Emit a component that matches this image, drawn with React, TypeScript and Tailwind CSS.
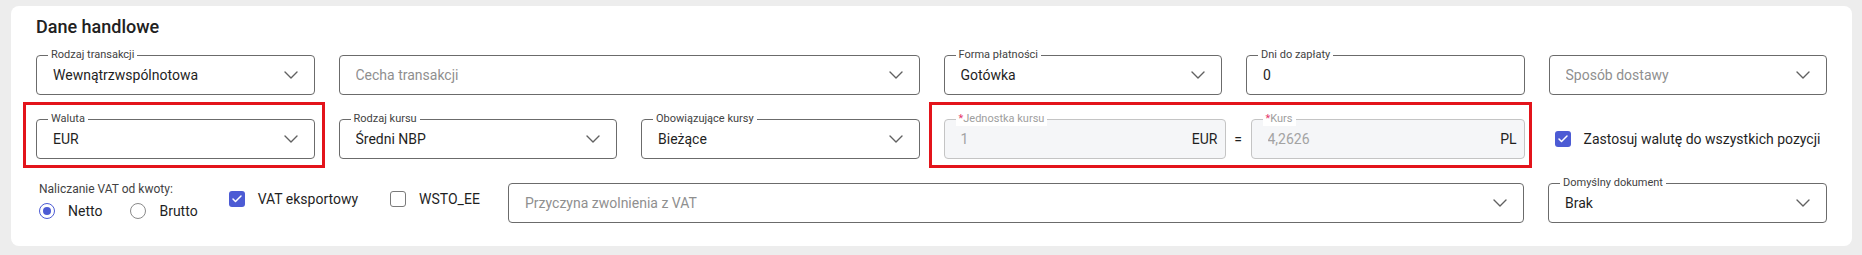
import { ChevronDown, Check } from "lucide-react";
import type { ReactNode } from "react";

type FieldProps = {
  label?: string;
  value?: string;
  placeholder?: string;
  select?: boolean;
  disabled?: boolean;
  required?: boolean;
  suffix?: string;
  className?: string;
};

function Field({ label, value, placeholder, select, disabled, required, suffix, className = "" }: FieldProps) {
  return (
    <div
      className={[
        "relative flex h-10 items-center rounded-[4px] border pl-4",
        select ? "pr-[11px]" : "pr-[7px]",
        disabled ? "border-[#c4c4c4] bg-[#f5f6f8]" : "border-[#6b6b6b] bg-white",
        className,
      ].join(" ")}
    >
      {label && (
        <span
          className={[
            "absolute -top-2 left-[11px] bg-white px-[3px] text-[11px] leading-[14px]",
            disabled ? "text-[#9e9e9e]" : "text-[#424242]",
          ].join(" ")}
        >
          {required && <span className="text-[#e5396b]">*</span>}
          {label}
        </span>
      )}
      <span
        className={[
          "flex-1 truncate text-[14px]",
          value && !disabled ? "text-[#1f1f1f]" : "text-[#8f8f8f]",
          disabled ? "text-[#a3a3a3]" : "",
        ].join(" ")}
      >
        {value ?? placeholder}
      </span>
      {suffix && <span className="text-[14px] text-[#1f1f1f]">{suffix}</span>}
      {select && <ChevronDown size={24} strokeWidth={1.4} className="text-[#616161]" />}
    </div>
  );
}

function Checkbox({ checked, children }: { checked?: boolean; children: ReactNode }) {
  return (
    <label className="flex h-4 items-center gap-[13px] text-[14px] text-[#1f1f1f]">
      <span
        className={[
          "flex h-4 w-4 shrink-0 items-center justify-center rounded-[3px]",
          checked ? "bg-[#4c5bd4]" : "border border-[#7a7a7a] bg-white",
        ].join(" ")}
      >
        {checked && <Check size={12} strokeWidth={3} className="text-white" />}
      </span>
      {children}
    </label>
  );
}

function Radio({ checked, children }: { checked?: boolean; children: ReactNode }) {
  return (
    <label className="flex h-5 items-center gap-[13px] text-[14px] text-[#1f1f1f]">
      <span
        className={[
          "flex h-4 w-4 shrink-0 items-center justify-center rounded-full border-[1.5px]",
          checked ? "border-[#4c5bd4]" : "border-[#8a8a8a]",
        ].join(" ")}
      >
        {checked && <span className="h-2 w-2 rounded-full bg-[#4c5bd4]" />}
      </span>
      {children}
    </label>
  );
}

function Highlight({ className }: { className: string }) {
  return <div className={"pointer-events-none absolute border-[3px] border-[#e3141b] " + className} />;
}

export default function App() {
  return (
    <div className="min-h-screen bg-[#ededed] pl-[11px] pr-[10px] pt-[6px] font-['Roboto',sans-serif]">
      <div className="rounded-lg bg-white px-[25px] pb-[23px] pt-[9px]">
        <h2 className="text-[18px] font-medium leading-6 text-[#212121]">Dane handlowe</h2>

        <div className="mt-4 grid grid-cols-6 gap-x-6 gap-y-6">
          {/* row 1 */}
          <Field label="Rodzaj transakcji" value="Wewnątrzwspólnotowa" select />
          <Field placeholder="Cecha transakcji" select className="col-span-2" />
          <Field label="Forma płatności" value="Gotówka" select />
          <Field label="Dni do zapłaty" value="0" />
          <Field placeholder="Sposób dostawy" select />

          {/* row 2 */}
          <div className="relative">
            <Field label="Waluta" value="EUR" select />
            <Highlight className="-bottom-[9px] -left-[13px] -right-[10px] -top-[17px]" />
          </div>
          <Field label="Rodzaj kursu" value="Średni NBP" select />
          <Field label="Obowiązujące kursy" value="Bieżące" select />
          <div className="relative col-span-2 flex items-center">
            <Field label="Jednostka kursu" required disabled value="1" suffix="EUR" className="w-[282px]" />
            <span className="w-[25px] text-center text-[14px] text-[#1f1f1f]">=</span>
            <Field label="Kurs" required disabled value="4,2626" suffix="PL" className="flex-1" />
            <Highlight className="-bottom-[9px] -left-[15px] -right-[7px] -top-[17px]" />
          </div>
          <div className="flex items-center pl-[6px]">
            <Checkbox checked>Zastosuj walutę do wszystkich pozycji</Checkbox>
          </div>
        </div>

        {/* row 3 */}
        <div className="mt-6 flex h-10 items-center gap-6">
          <div className="flex h-10 w-[448px] shrink-0 items-start">
            <div className="-mt-px flex flex-col pl-[3px]">
              <span className="text-[12px] leading-[14px] text-[#424242]">Naliczanie VAT od kwoty:</span>
              <div className="mt-[5px] flex items-center gap-7">
                <Radio checked>Netto</Radio>
                <Radio>Brutto</Radio>
              </div>
            </div>
            <div className="ml-[31px] mt-2 flex items-center gap-8">
              <Checkbox checked>VAT eksportowy</Checkbox>
              <Checkbox>WSTO_EE</Checkbox>
            </div>
          </div>
          <Field placeholder="Przyczyna zwolnienia z VAT" select className="flex-1" />
          <Field label="Domyślny dokument" value="Brak" select className="w-[279px] shrink-0" />
        </div>
      </div>
    </div>
  );
}
